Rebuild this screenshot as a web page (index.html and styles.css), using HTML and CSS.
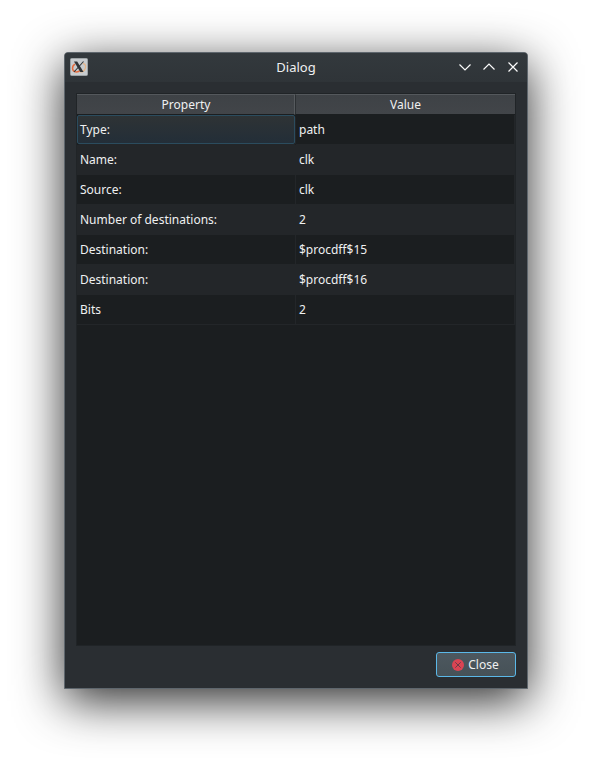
FILE: index.html
```html
<!DOCTYPE html>
<html lang="en">
<head>
<meta charset="utf-8">
<title>Dialog</title>
<link rel="stylesheet" href="styles.css">
</head>
<body>
<main class="window">
  <header class="titlebar">
    <svg class="app-icon" viewBox="0 0 18 18">
      <rect x=".5" y=".5" width="17" height="17" rx="1" fill="#c8cccf" stroke="#9da3a6"/>
      <path d="M5 6.200C1.500 8.200 1.800 13 5.500 13.800C7.500 14.100 9 13.500 10 12.500" fill="none" stroke="#e66b3d" stroke-width="1.500"/>
      <path d="M13 5.500C16 6 16.300 9 14.500 12C13.500 13.300 12 14 10.500 14" fill="none" stroke="#e5b487" stroke-width="1.300"/>
      <path d="M4 3.500H7.200L13.500 14H10.300Z" fill="#303336"/>
      <path d="M13.500 3.500L4 14" stroke="#303336" stroke-width="1.100"/>
    </svg>
    <h1 class="title">Dialog</h1>
    <div class="controls">
      <svg viewBox="0 0 12 12"><path d="M.5 3.500L6 9L11.500 3.500"/></svg>
      <svg viewBox="0 0 12 12"><path d="M.5 8.500L6 3L11.500 8.500"/></svg>
      <svg viewBox="0 0 12 12"><path d="M1.500 1.500L10.500 10.500M10.500 1.500L1.500 10.500"/></svg>
    </div>
  </header>
  <div class="content">
    <section class="table">
      <div class="row head"><div>Property</div><div>Value</div></div>
      <div class="row"><div class="current">Type:</div><div>path</div></div>
      <div class="row alt"><div>Name:</div><div>clk</div></div>
      <div class="row"><div>Source:</div><div>clk</div></div>
      <div class="row alt"><div>Number of destinations:</div><div>2</div></div>
      <div class="row"><div>Destination:</div><div>$procdff$15</div></div>
      <div class="row alt"><div>Destination:</div><div>$procdff$16</div></div>
      <div class="row"><div>Bits</div><div>2</div></div>
    </section>
    <button class="close">
      <svg viewBox="0 0 12 12"><circle cx="6" cy="6" r="6" fill="#da4453"/><path d="M3.300 3.300L8.700 8.700M8.700 3.300L3.300 8.700" stroke="#6b3c47" stroke-width="1"/></svg>
      <span>Close</span>
    </button>
  </div>
</main>
</body>
</html>
```
FILE: styles.css
```css
* { box-sizing: border-box; }
body {
  margin: 0;
  height: 765px;
  padding: 52px 64px 76px;
  overflow: hidden;
  background: #fff;
  color: #eff0f1;
  font: 12px/16px "Noto Sans", sans-serif;
}
.window {
  height: 637px;
  display: flex;
  flex-direction: column;
  border: 1px solid #5e666d;
  border-radius: 4px 4px 0 0;
  background: #2a2e32;
  box-shadow: 0 12px 48px rgba(0, 0, 0, .83);
}
.titlebar {
  height: 29px;
  flex: none;
  display: grid;
  grid-template-columns: 60px 1fr 60px;
  align-items: center;
  padding: 0 8px 2px 5px;
  border-radius: 3px 3px 0 0;
  background: linear-gradient(#33393d, #2f3438);
}
.app-icon { width: 18px; height: 18px; }
.title {
  margin: 0 0 0 3px;
  text-align: center;
  font-size: 13px;
  line-height: 18px;
  font-weight: 400;
}
.controls { display: flex; justify-content: flex-end; gap: 12px; }
.controls svg { width: 12px; height: 12px; flex: none; fill: none; stroke: #fcfcfc; stroke-width: 1.2; }
.content {
  flex: 1;
  display: flex;
  flex-direction: column;
  align-items: flex-end;
  padding: 11px;
}
.table {
  width: 440px;
  height: 553px;
  border: 1px solid #202427;
  background: #1b1e20;
}
.row { display: grid; grid-template-columns: 219px 219px; height: 30px; }
.row > div {
  padding: 7px 3px 0;
  border-right: 1px solid #232629;
  border-bottom: 1px solid #232629;
}
.alt > div { background: #232629; }
.row.head { height: 21px; grid-template-columns: 218px 220px; }
.head > div {
  padding: 2px 0 0 1px;
  text-align: center;
  background: linear-gradient(#3e4246, #424549);
  border-top: 1px solid #54585c;
  border-right: 1px solid #565a5e;
  border-bottom: 1px solid #1b1e20;
}
.head > div:last-child { padding-left: 0; border-left: 1px solid #2c3033; border-right: 0; }
.row > .current {
  margin: 0 1px 1px 0;
  padding: 6px 2px 0;
  border: 1px solid #2b4c5e;
  border-radius: 2px;
  background: linear-gradient(#2e3335, #232e38);
  box-shadow: 1px 1px #232629;
}
.close {
  width: 80px;
  height: 25px;
  margin-top: 6px;
  padding: 0 1px 0 0;
  display: flex;
  align-items: center;
  justify-content: center;
  gap: 4px;
  border: 1px solid #5bb8e8;
  border-radius: 3px;
  background: linear-gradient(#4d585f, #465157);
  color: inherit;
  font: inherit;
}
.close svg { width: 12px; height: 12px; }
```
